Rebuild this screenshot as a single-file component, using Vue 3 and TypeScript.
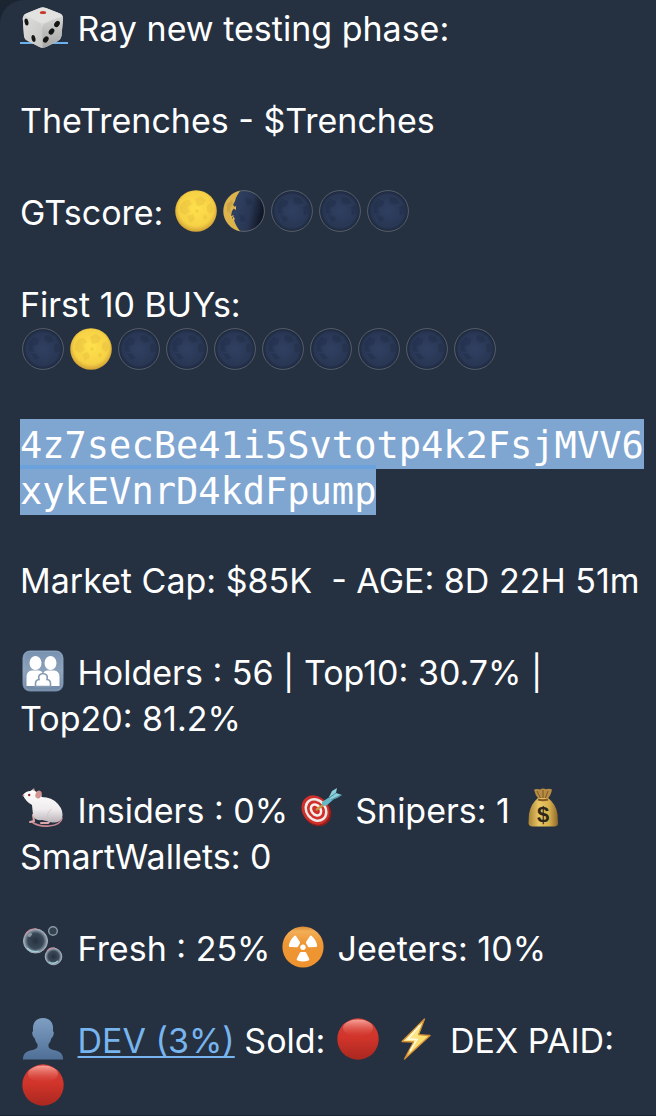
<script setup lang="ts">
import { computed } from 'vue'

interface Part {
  text?: string
  icon?: string
  label?: string
  link?: boolean
}

type Line = Part[]

const t = (text: string): Part => ({ text })
const e = (icon: string, label: string): Part => ({ icon, label })
const moons = (phases: string): Part[] =>
  phases.split('').map((p) =>
    p === 'F' ? e('full', 'Full moon') : p === 'Q' ? e('quarter', 'Quarter moon') : e('new', 'New moon'),
  )

const intro: Line[] = [
  [{ icon: 'dice', label: 'Dice', link: true }, t(' Ray new testing phase:')],
  [],
  [t('TheTrenches - $Trenches')],
  [],
  [t('GTscore: '), ...moons('FQNNN')],
  [],
  [t('First 10 BUYs:')],
  moons('NFNNNNNNNN'),
  [],
]

const address = ['4z7secBe41i5Svtotp4k2FsjMVV6', 'xykEVnrD4kdFpump']

const stats: Line[] = [
  [],
  [t('Market Cap: $85K  - AGE: 8D 22H 51m')],
  [],
  [e('family', 'Family'), t(' Holders : 56 | Top10: 30.7% |')],
  [t('Top20: 81.2%')],
  [],
  [e('rat', 'Rat'), t(' Insiders : 0% '), e('target', 'Target'), t(' Snipers: 1 '), e('bag', 'Money bag')],
  [t('SmartWallets: 0')],
  [],
  [e('bubbles', 'Bubbles'), t(' Fresh : 25% '), e('radiation', 'Radioactive'), t(' Jeeters: 10%')],
  [],
  [
    e('person', 'Person'),
    t(' '),
    { text: 'DEV (3%)', link: true },
    t(' Sold: '),
    e('red', 'Red circle'),
    t(' '),
    e('bolt', 'Lightning'),
    t(' DEX PAID:'),
  ],
  [e('red', 'Red circle')],
]

const blocks = computed(() => [
  { key: 'intro', lines: intro },
  { key: 'stats', lines: stats },
])
</script>

<template>
  <main class="page">
    <svg class="defs" aria-hidden="true">
      <defs>
        <radialGradient id="g-full" cx=".5" cy=".45" r=".55">
          <stop offset="0" stop-color="#ffe14c" />
          <stop offset=".75" stop-color="#f6d145" />
          <stop offset="1" stop-color="#cf9f35" />
        </radialGradient>
        <radialGradient id="g-new" cx=".5" cy=".5" r=".5">
          <stop offset="0" stop-color="#304061" />
          <stop offset=".8" stop-color="#293754" />
          <stop offset="1" stop-color="#1b263b" />
        </radialGradient>
        <linearGradient id="g-dark" x1="0" x2="1" y1=".4" y2=".6">
          <stop offset=".3" stop-color="#2f3f60" />
          <stop offset=".65" stop-color="#293653" />
          <stop offset=".9" stop-color="#131b2b" />
          <stop offset="1" stop-color="#0b111d" />
        </linearGradient>
        <linearGradient id="g-family" x1="0" y1="0" x2="0" y2="1">
          <stop offset="0" stop-color="#7791af" />
          <stop offset=".5" stop-color="#8ca2bb" />
          <stop offset="1" stop-color="#6d86a4" />
        </linearGradient>
        <linearGradient id="g-rat" x1="0" y1="0" x2="0" y2="1">
          <stop offset="0" stop-color="#ffffff" />
          <stop offset=".6" stop-color="#f0eced" />
          <stop offset="1" stop-color="#b9b2b7" />
        </linearGradient>
        <linearGradient id="g-bag" x1="0" x2="1">
          <stop offset="0" stop-color="#a98235" />
          <stop offset=".35" stop-color="#e8c765" />
          <stop offset=".7" stop-color="#d8b04d" />
          <stop offset="1" stop-color="#8f692b" />
        </linearGradient>
        <linearGradient id="g-rad" x1="0" y1="0" x2="0" y2="1">
          <stop offset="0" stop-color="#d98a35" />
          <stop offset=".12" stop-color="#f3ae57" />
          <stop offset=".4" stop-color="#ee9735" />
          <stop offset="1" stop-color="#ee922e" />
        </linearGradient>
        <linearGradient id="g-person" x1="0" y1="0" x2="0" y2="1">
          <stop offset="0" stop-color="#7e9fc2" />
          <stop offset="1" stop-color="#506f97" />
        </linearGradient>
        <linearGradient id="g-red" x1="0" y1="0" x2="0" y2="1">
          <stop offset="0" stop-color="#ce4238" />
          <stop offset=".45" stop-color="#d2342a" />
          <stop offset="1" stop-color="#a92820" />
        </linearGradient>
        <linearGradient id="g-shine" x1="0" y1="0" x2="0" y2="1">
          <stop offset="0" stop-color="#ffb5ad" stop-opacity=".85" />
          <stop offset="1" stop-color="#e8584e" stop-opacity="0" />
        </linearGradient>
        <radialGradient id="g-bubble">
          <stop offset="0" stop-color="#26313f" />
          <stop offset=".65" stop-color="#3b4958" />
          <stop offset=".88" stop-color="#7d8f9c" />
          <stop offset="1" stop-color="#aab7bf" />
        </radialGradient>
        <linearGradient id="g-bolt" x1="0" y1="0" x2="1" y2="1">
          <stop offset="0" stop-color="#fff6b0" />
          <stop offset="1" stop-color="#f8cf4c" />
        </linearGradient>
        <linearGradient id="g-dice-l" x1="0" y1="0" x2="1" y2="1">
          <stop offset="0" stop-color="#dededc" />
          <stop offset="1" stop-color="#c4c4c2" />
        </linearGradient>
        <linearGradient id="g-dice-r" x1="0" y1="0" x2="0" y2="1">
          <stop offset="0" stop-color="#d2d2d0" />
          <stop offset="1" stop-color="#a6a6a5" />
        </linearGradient>

        <symbol id="i-full" viewBox="-2 0 48 42">
          <circle cx="21" cy="21" r="20.8" fill="url(#g-full)" />
          <g fill="#d5ac38" opacity=".24">
            <path d="M5 16q3-7 9-6l3 4-4 3 2 5-5 3-5-3z" />
            <path d="M20 9l6-3 5 4-3 5-6 1z" />
            <path d="M32 16l4-3 3 6-3 5-4-3z" />
            <path d="M12 26l6-2 2 5-5 4z" />
            <circle cx="30" cy="27" r="2" />
            <circle cx="22" cy="21" r="2" />
          </g>
        </symbol>
        <symbol id="i-new" viewBox="-2 0 48 42">
          <circle cx="21" cy="21" r="20.4" fill="url(#g-new)" stroke="#5d646d" stroke-width=".9" />
          <g fill="#1b2943" opacity=".32">
            <path d="M6 16l5-7 6 2-1 5-5 2 1 6-5-1z" />
            <path d="M23 7l6 1 3 5-6 2-4-3z" />
            <path d="M32 17l5-2 1 8-5 2z" />
            <path d="M9 25l6 1 3 4-5 2z" />
          </g>
        </symbol>
        <symbol id="i-quarter" viewBox="-2 0 48 42">
          <circle cx="21" cy="21" r="20.4" fill="url(#g-dark)" stroke="#646b73" stroke-width=".9" />
          <path
            d="M17 .8A20.6 20.6 0 0 0 17 41.2C14 37 12 34 11 30l-2-2 2-3-3 1 1-5 3-4-2-2 2-4C13 7 15 4 17 .8z"
            fill="#ddb34b"
          />
          <path d="M4 14l5-4 1 4-3 4 1 6-4-3z" fill="#b8923f" opacity=".4" />
          <path d="M10 18l3-2v4zM10 26l2 3-2 2z" fill="#e0b754" />
          <g fill="#1b2943" opacity=".32">
            <path d="M22 8l6 1 2 5-6 2zM32 17l5-2v8l-4 2zM16 24l5 2 2 4-5 2z" />
          </g>
        </symbol>
        <symbol id="i-dice" viewBox="-2 0 48 42">
          <rect x="-2" y="36" width="48" height="2" fill="#6cb0ec" />
          <path
            d="M17.500 2Q20.500.6 24 2L38 7.500Q41.500 9 41 13L39.500 30Q39 33 36 35L24 41Q20.500 42.500 17.500 41L5 34.500Q2.300 33 2 30L.8 13Q.6 9 4 7.500z"
            fill="#d5d5d3"
          />
          <path d="M1 11Q10 13 17.500 17.500 20 19 20 23L20.500 41.800Q19 41.800 17.500 41L5 34.500Q2.300 33 2 30L.8 13z" fill="url(#g-dice-l)" />
          <path d="M41 11Q32 13 23.500 17.500 20 19 20 23L20.500 41.800Q22 41.800 24 41L36 35Q39 33 39.500 30L41 13z" fill="url(#g-dice-r)" />
          <path d="M2 9.500Q3 8 5 7.200L18 2Q20.500 1 24 2L38 7.500Q40 8.500 40.500 10.500 31 12.500 23.500 16.500 20.500 18 17.500 16.500 10 12.500 2 9.500z" fill="#e2e2e0" />
          <ellipse cx="21" cy="6.500" rx="3.200" ry="1.600" fill="#c8392d" />
          <g fill="#151515">
            <ellipse cx="4.500" cy="16" rx="1.900" ry="3.500" transform="rotate(-12 4.500 16)" />
            <ellipse cx="11.500" cy="32.500" rx="1.900" ry="3.500" transform="rotate(-12 11.500 32.500)" />
            <ellipse cx="35" cy="18" rx="2.400" ry="3.500" transform="rotate(35 35 18)" />
            <ellipse cx="29.500" cy="25.500" rx="2.400" ry="3.500" transform="rotate(35 29.500 25.500)" />
            <ellipse cx="23.800" cy="33.500" rx="2.400" ry="3.500" transform="rotate(35 23.800 33.500)" />
          </g>
        </symbol>
        <symbol id="i-family" viewBox="-2 0 48 42">
          <rect x=".5" y=".5" width="41" height="41" rx="7.500" fill="url(#g-family)" />
          <rect x="2" y="1.500" width="38" height="38.500" rx="6" fill="none" stroke="#a5b6c9" stroke-width="1" opacity=".4" />
          <g fill="#fff">
            <ellipse cx="13.500" cy="13" rx="6" ry="7" />
            <ellipse cx="28.500" cy="13" rx="6" ry="7" />
            <path d="M4.500 36V27Q4.500 21 10 20.500h7q4 .5 4 5 0-4.500 4-5h7q5.500.5 5.500 6.500v9z" />
          </g>
          <path
            d="M13.500 36.500v-3q0-3.500 3.500-4-1.500-5.500 4-6 5.500.5 4 6 3.500.5 3.500 4v3z"
            fill="#fff"
            stroke="#8499b2"
            stroke-width="1.600"
          />
        </symbol>
        <symbol id="i-rat" viewBox="-2 0 48 42">
          <path d="M10 34Q17 39 27 38 39 37 40 30" fill="none" stroke="#ca8791" stroke-width="1.700" stroke-linecap="round" />
          <path d="M11 27l1 6-4 1M29 32l-3 3h-7" fill="none" stroke="#dda7aa" stroke-width="2" stroke-linecap="round" />
          <path
            d="M.8 7Q4 3 8.500 3Q11 0 13 3l1.500 1Q20 3 19.500 9Q30 9 36 16Q42 23 40 30Q37 36 28 34L20 32Q12 33 11 27L10 17Q4 14 .8 7z"
            fill="url(#g-rat)"
          />
          <ellipse cx="16.500" cy="6.500" rx="3" ry="4" fill="#d39592" transform="rotate(20 16.500 6.500)" />
          <path d="M10 2l2-2 1 3z" fill="#c59b97" />
          <circle cx="7.200" cy="7" r="1.200" fill="#8e2630" />
          <circle cx="1.500" cy="7.500" r="1" fill="#d29a9a" />
          <path d="M27 32q-4-7 3-11" fill="none" stroke="#c9c2c7" stroke-width="1" opacity=".7" />
        </symbol>
        <symbol id="i-target" viewBox="-2 0 48 42">
          <ellipse cx="17" cy="23.500" rx="13.500" ry="15.500" fill="#8c1d1b" transform="rotate(-38 17 23.500)" />
          <ellipse cx="15.500" cy="22" rx="13" ry="15.500" fill="#cf302c" transform="rotate(-38 15.500 22)" />
          <g fill="none" transform="rotate(-38 16 22)">
            <ellipse cx="16" cy="22" rx="9.500" ry="11.500" stroke="#f0e9e5" stroke-width="2.500" />
            <ellipse cx="16" cy="22" rx="4.500" ry="6" stroke="#f5eeea" stroke-width="2.500" />
          </g>
          <path d="M16 22L26 15" stroke="#c29a42" stroke-width="2.200" />
          <path d="M22 14L31 8l3 3-8 7-4-1z" fill="#66b8c7" />
          <path d="M29 9l3-6 5-3-1 5 6 2-5 3-6 2z" fill="#8bd0da" />
          <path d="M29 10l7-5M31 12l10-5" stroke="#438d9b" stroke-width="1" />
        </symbol>
        <symbol id="i-bag" viewBox="-2 0 48 42">
          <path d="M12 1.500q3-1 6 0 3-2 6-.2 3-1 6 .2-1 6-5 10h-8Q13 7 12 1.500z" fill="#b88d43" />
          <path d="M15 3l4 8M21 2v9M26 3l-3 8" stroke="#795725" stroke-width="1" />
          <path d="M16 10h10Q34 16 35.500 26l.5 10q-.5 2-4 2.500H10Q6.500 38 6.500 35L7 26Q8.500 16 16 10z" fill="url(#g-bag)" />
          <path d="M16 11.500q5 1.500 10 0" fill="none" stroke="#85571f" stroke-width="2.200" />
          <text x="21" y="34" text-anchor="middle" class="dollar">$</text>
        </symbol>
        <symbol id="i-bubbles" viewBox="-2 0 48 42">
          <circle cx="13.500" cy="15" r="12" fill="url(#g-bubble)" stroke="#a9adb8" stroke-width="1" />
          <circle cx="31.500" cy="30.500" r="8.300" fill="url(#g-bubble)" stroke="#a9adb8" stroke-width="1" />
          <circle cx="31" cy="5" r="4.300" fill="#34424f" stroke="#899aa5" stroke-width="1.400" />
          <path d="M3 9Q7 2 15 3M25 25q3-4 8-3" fill="none" stroke="#c58c9b" stroke-width="1.200" />
          <path d="M5 22q5 5 12 3M27 36q5 3 9-1" fill="none" stroke="#9fd0d9" stroke-width="1.300" />
          <ellipse cx="8" cy="9" rx="2.500" ry="1.500" fill="#dbe2e6" opacity=".45" transform="rotate(-40 8 9)" />
        </symbol>
        <symbol id="i-radiation" viewBox="-2 0 48 42">
          <circle cx="21" cy="21" r="20.600" fill="url(#g-rad)" />
          <g fill="#fff">
            <circle cx="21" cy="21.300" r="2.700" />
            <path id="blade" d="M19 26h4q.8 0 1.200.8l3 6q.5 1.200-.7 1.700-5.500 2-11 0-1.200-.5-.7-1.700l3-6q.4-.8 1.200-.8z" />
            <use href="#blade" transform="rotate(120 21 21.300)" />
            <use href="#blade" transform="rotate(240 21 21.300)" />
          </g>
        </symbol>
        <symbol id="i-person" viewBox="-2 0 48 42">
          <path
            d="M21 0Q32 .5 31 13q1.500 1 .5 4-.7 2.500-2 3-1 4-3 6v3Q28 31.500 34 32.500 41 34 41.200 41.500H.8Q1 34 8 32.500 14 31.500 15.500 29v-3q-2-2-3-6-1.300-.5-2-3-1-3 .5-4Q10 .5 21 0z"
            fill="url(#g-person)"
          />
        </symbol>
        <symbol id="i-red" viewBox="-2 0 48 42">
          <circle cx="21" cy="21" r="20.700" fill="url(#g-red)" />
          <ellipse cx="21" cy="10" rx="15" ry="8.500" fill="url(#g-shine)" />
        </symbol>
        <symbol id="i-bolt" viewBox="-2 0 48 42">
          <path d="M29.500 1L7 23.500l11.500.5L9.500 41 35 17.500l-11.500-.8z" fill="url(#g-bolt)" stroke="#d28f35" stroke-width="1.300" stroke-linejoin="round" />
          <path d="M25 7L13 21l9 .5L15 33" fill="none" stroke="#fffbe0" stroke-width="1.500" />
        </symbol>
      </defs>
    </svg>

    <article class="message">
      <template v-for="block in blocks" :key="block.key">
        <section>
          <p v-for="(line, i) in block.lines" :key="i" class="line">
            <template v-for="(part, j) in line" :key="j">
              <a v-if="part.link" class="link" href="#"><svg v-if="part.icon" class="emoji" role="img" :aria-label="part.label"><use :href="'#i-' + part.icon" /></svg><template v-else>{{ part.text }}</template></a>
              <svg v-else-if="part.icon" class="emoji" role="img" :aria-label="part.label"><use :href="'#i-' + part.icon" /></svg>
              <span v-else>{{ part.text }}</span>
            </template>
          </p>
        </section>
        <code v-if="block.key === 'intro'" class="address">
          <span v-for="row in address" :key="row" class="row">{{ row }}</span>
        </code>
      </template>
    </article>
  </main>
</template>

<style>
body {
  margin: 0;
  background: #1b2431;
}
</style>

<style scoped>
.page {
  background: #1b2431;
}
.defs {
  position: absolute;
  width: 0;
  height: 0;
}
.message {
  padding: 6px 0 5px 20px;
  border-radius: 24px 0 0 0;
  border-bottom: 1px solid #1b2431;
  background: #253040;
  color: #fff;
  font-family: Inter, "Liberation Sans", sans-serif;
  font-size: 34px;
  line-height: 46px;
}
.line {
  margin: 0;
  min-height: 46px;
  white-space: pre;
}
.emoji {
  display: inline-block;
  width: 48px;
  height: 42px;
  margin: -4px 0;
  vertical-align: -3px;
}
.dollar {
  font-family: "Liberation Sans", sans-serif;
  font-size: 22px;
  font-weight: bold;
  fill: #2b2619;
}
.link {
  color: #78b4ee;
  text-decoration: underline;
  text-decoration-thickness: 2px;
  text-underline-offset: 3px;
  text-decoration-skip-ink: none;
}
.address {
  display: flex;
  flex-direction: column;
  align-items: flex-start;
  margin: -1px 0 -3px;
  font-family: "DejaVu Sans Mono", monospace;
  font-size: 37px;
  line-height: 46px;
}
.row {
  padding-top: 4px;
  background: #7fa5d1;
}
.row + .row {
  margin-top: -4px;
  background: linear-gradient(#6ba2dd 4px, #7fa5d1 4px);
}
</style>
